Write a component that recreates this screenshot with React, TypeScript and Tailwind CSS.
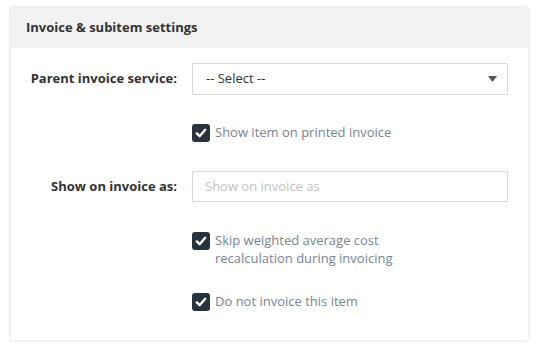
import React from 'react';

function Check() {
  return (
    <span className="flex h-[18px] w-[18px] shrink-0 items-center justify-center rounded-[3px] bg-[#29323d]">
      <svg width="12" height="12" viewBox="0 0 12 12">
        <path d="M1.8 6.4 L4.6 9.2 L10.2 2.8" fill="none" stroke="#fff" strokeWidth="2.4" strokeLinecap="round" strokeLinejoin="round" />
      </svg>
    </span>
  );
}

function CheckRow({ children, className = '' }: { children: React.ReactNode; className?: string }) {
  return (
    <div className={`flex ${className}`}>
      <div className="w-[181px] shrink-0" />
      <label className="flex items-start gap-[5px]">
        <Check />
        <span className="mt-[-1px] w-[185px] text-[13px] leading-[18px] text-[#7a8494]">{children}</span>
      </label>
    </div>
  );
}

export default function App() {
  return (
    <div className="min-h-[350px] bg-white pl-[11px] pt-[8px] font-['Open_Sans',sans-serif]">
      <div className="w-[517px] bg-white shadow-[0_0_4px_rgba(0,0,0,0.18)]">
        <div className="flex h-[40px] items-center bg-[#f2f2f2] px-[15px] text-[13px] font-bold text-[#333]">
          Invoice &amp; subitem settings
        </div>
        <div className="pb-[29px] pt-[15px]">
          <div className="flex items-center">
            <div className="w-[166px] pr-0 text-right text-[13px] font-bold text-[#333]">Parent invoice service:</div>
            <div className="ml-[15px] flex h-[32px] w-[316px] items-center justify-between rounded-[2px] border border-[#d9d9d9] pl-[13px] pr-[10px] text-[13px] text-[#333]">
              <span>-- Select --</span>
              <svg width="9" height="6" viewBox="0 0 9 6">
                <path d="M0 0 H9 L4.5 6 Z" fill="#555" />
              </svg>
            </div>
          </div>
          <CheckRow className="mt-[29px]">Show item on printed invoice</CheckRow>
          <div className="mt-[29px] flex items-center">
            <div className="w-[166px] text-right text-[13px] font-bold text-[#333]">Show on invoice as:</div>
            <div className="ml-[15px] flex h-[31px] w-[316px] items-center rounded-[2px] border border-[#d9d9d9] pl-[12px] text-[13px] text-[#c2c2c2]">
              Show on invoice as
            </div>
          </div>
          <CheckRow className="mt-[30px]">Skip weighted average cost recalculation during invoicing</CheckRow>
          <CheckRow className="mt-[26px]">Do not invoice this item</CheckRow>
        </div>
      </div>
    </div>
  );
}
